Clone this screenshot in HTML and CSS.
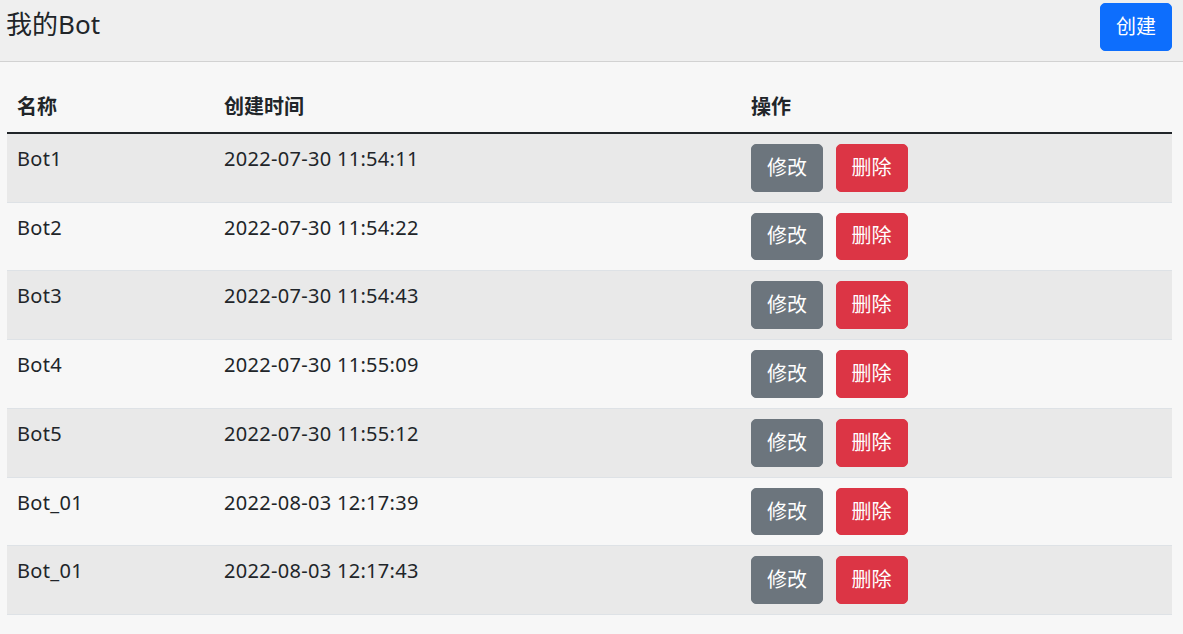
FILE: index.html
```html
<!DOCTYPE html>
<html lang="zh-CN">
<head>
<meta charset="utf-8">
<title>我的Bot</title>
<link rel="stylesheet" href="styles.css">
</head>
<body>
<div class="card">
  <div class="card-header">
    <span class="title">我的Bot</span>
    <button class="btn btn-primary">创建</button>
  </div>
  <div class="card-body">
    <table class="table">
      <thead>
        <tr><th class="c1">名称</th><th class="c2">创建时间</th><th class="c3">操作</th></tr>
      </thead>
      <tbody>
        <tr><td>Bot1</td><td>2022-07-30 11:54:11</td><td><button class="btn btn-secondary">修改</button><button class="btn btn-danger">删除</button></td></tr>
        <tr><td>Bot2</td><td>2022-07-30 11:54:22</td><td><button class="btn btn-secondary">修改</button><button class="btn btn-danger">删除</button></td></tr>
        <tr><td>Bot3</td><td>2022-07-30 11:54:43</td><td><button class="btn btn-secondary">修改</button><button class="btn btn-danger">删除</button></td></tr>
        <tr><td>Bot4</td><td>2022-07-30 11:55:09</td><td><button class="btn btn-secondary">修改</button><button class="btn btn-danger">删除</button></td></tr>
        <tr><td>Bot5</td><td>2022-07-30 11:55:12</td><td><button class="btn btn-secondary">修改</button><button class="btn btn-danger">删除</button></td></tr>
        <tr><td>Bot_01</td><td>2022-08-03 12:17:39</td><td><button class="btn btn-secondary">修改</button><button class="btn btn-danger">删除</button></td></tr>
        <tr><td>Bot_01</td><td>2022-08-03 12:17:43</td><td><button class="btn btn-secondary">修改</button><button class="btn btn-danger">删除</button></td></tr>
      </tbody>
    </table>
  </div>
</div>
</body>
</html>
```
FILE: styles.css
```css
html, body {
  margin: 0;
  padding: 0;
  background: #f7f7f7;
  font-family: "Noto Sans", "Noto Sans CJK SC", sans-serif;
  font-size: 20px;
  line-height: 1.5;
  color: #212529;
}

.card {
  background: #f7f7f7;
}

.card-header {
  display: flex;
  justify-content: space-between;
  align-items: flex-start;
  background: #efefef;
  border-bottom: 1px solid #d2d2d2;
  padding: 3px 11px 10px 6px;
}

.title {
  font-size: 26px;
  line-height: 42px;
  color: #212529;
}

.card-body {
  padding: 20px 11px 20px 7px;
}

.btn {
  display: inline-block;
  font-family: inherit;
  font-size: 20px;
  line-height: 30px;
  padding: 7.9px 15px;
  border: 1px solid transparent;
  border-radius: 5px;
  color: #fff;
  cursor: pointer;
}

.btn-primary {
  background: #0d6efd;
  border-color: #0d6efd;
}

.btn-secondary {
  background: #6c757d;
  border-color: #6c757d;
  margin-right: 12.5px;
}

.btn-danger {
  background: #dc3545;
  border-color: #dc3545;
}

.table {
  width: 100%;
  border-collapse: collapse;
  table-layout: fixed;
}

.c1 { width: 207px; }
.c2 { width: 527px; }

.table th,
.table td {
  box-sizing: border-box;
  text-align: left;
  vertical-align: top;
  padding: 10px;
  border-bottom: 1px solid #dee2e6;
}

.table td {
  letter-spacing: 0.3px;
}

.table th {
  font-weight: 700;
  border-bottom: 2.5px solid #212529;
}

.table tbody tr:nth-child(odd) {
  background: #e9e9e9;
}
```
